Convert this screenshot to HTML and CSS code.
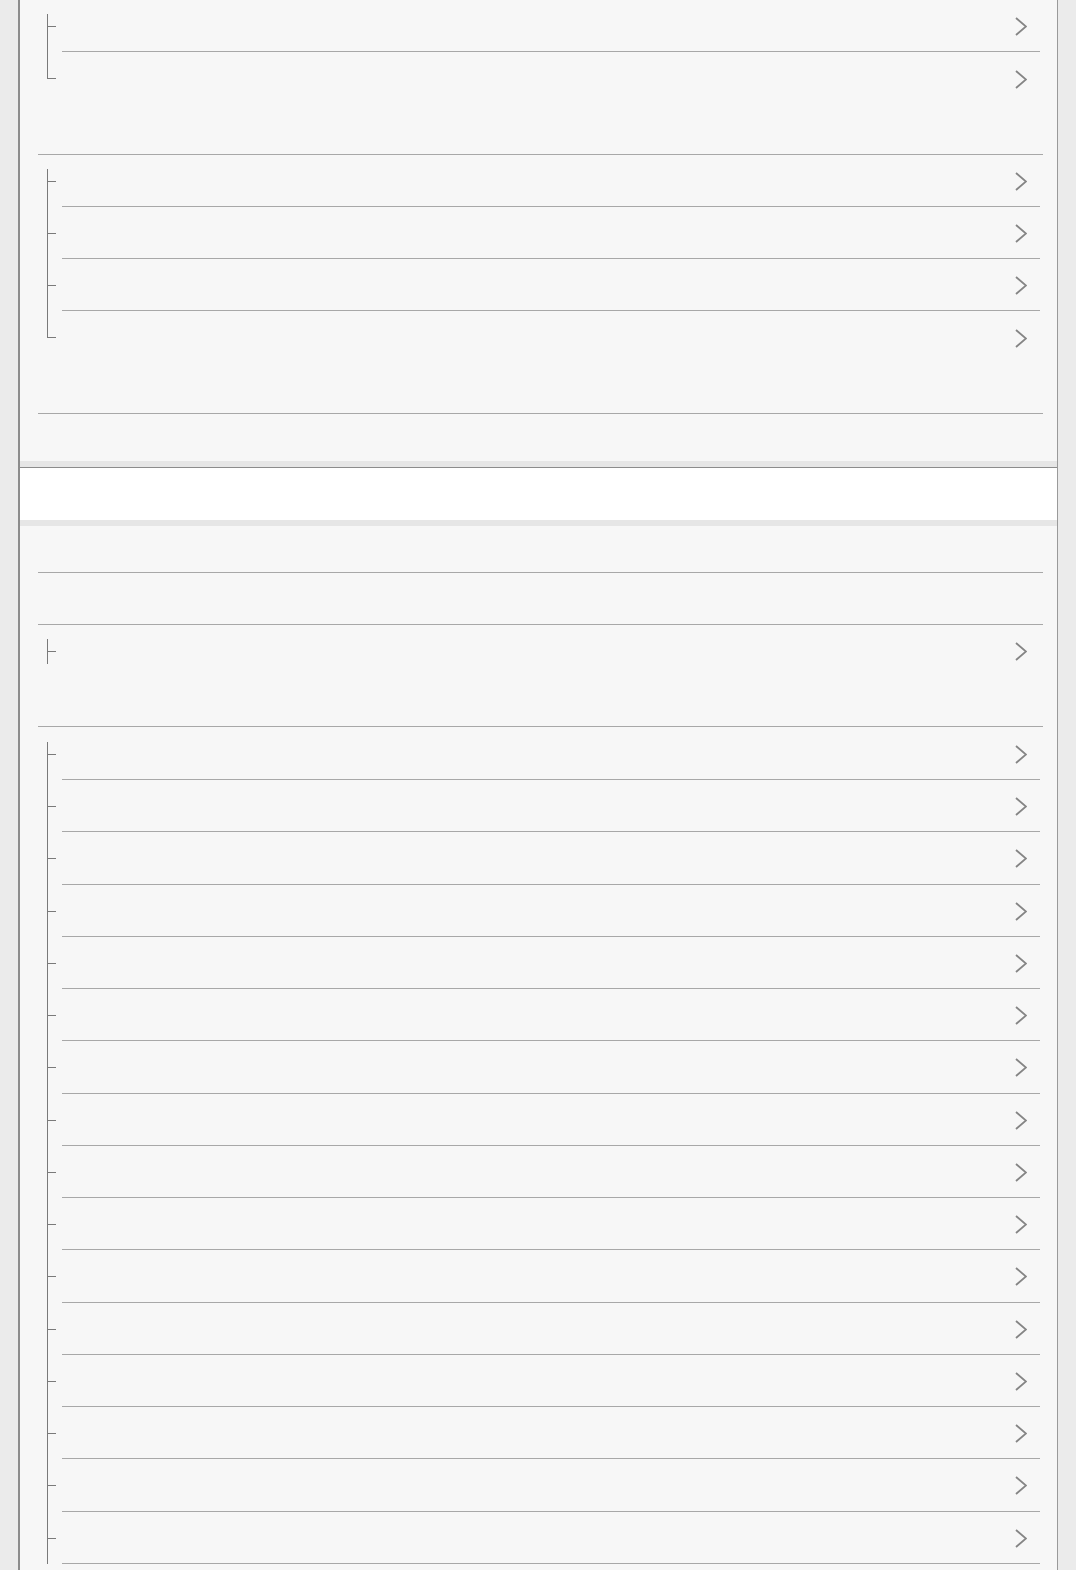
FILE: index.html
```html
<!DOCTYPE html>
<html lang="en">
<head>
<meta charset="utf-8">
<title>List</title>
<link rel="stylesheet" href="styles.css">
</head>
<body>
<div class="panel">
  <div class="group">
    <div class="row first"><div class="tree"><div class="up"></div><div class="down"></div></div><div class="main"><svg class="chev" viewBox="0 0 12 20"><polyline points="1,1 11,9.5 1,18"/></svg></div></div>
    <div class="row last"><div class="tree"><div class="up"></div><div class="down"></div></div><div class="main"><svg class="chev" viewBox="0 0 12 20"><polyline points="1,1 11,9.5 1,18"/></svg></div></div>
  </div>
  <div class="group">
    <div class="row first"><div class="tree"><div class="up"></div><div class="down"></div></div><div class="main"><svg class="chev" viewBox="0 0 12 20"><polyline points="1,1 11,9.5 1,18"/></svg></div></div>
    <div class="row"><div class="tree"><div class="up"></div><div class="down"></div></div><div class="main"><svg class="chev" viewBox="0 0 12 20"><polyline points="1,1 11,9.5 1,18"/></svg></div></div>
    <div class="row"><div class="tree"><div class="up"></div><div class="down"></div></div><div class="main"><svg class="chev" viewBox="0 0 12 20"><polyline points="1,1 11,9.5 1,18"/></svg></div></div>
    <div class="row last"><div class="tree"><div class="up"></div><div class="down"></div></div><div class="main"><svg class="chev" viewBox="0 0 12 20"><polyline points="1,1 11,9.5 1,18"/></svg></div></div>
  </div>
  <div class="bar"></div>
  <div class="blank-row tall"></div>
  <div class="blank-row"></div>
  <div class="group">
    <div class="row first single"><div class="tree"><div class="up"></div><div class="down"></div></div><div class="main"><svg class="chev" viewBox="0 0 12 20"><polyline points="1,1 11,9.5 1,18"/></svg></div></div>
  </div>
  <div class="group open">
    <div class="row first"><div class="tree"><div class="up"></div><div class="down"></div></div><div class="main"><svg class="chev" viewBox="0 0 12 20"><polyline points="1,1 11,9.5 1,18"/></svg></div></div>
    <div class="row"><div class="tree"><div class="up"></div><div class="down"></div></div><div class="main"><svg class="chev" viewBox="0 0 12 20"><polyline points="1,1 11,9.5 1,18"/></svg></div></div>
    <div class="row"><div class="tree"><div class="up"></div><div class="down"></div></div><div class="main"><svg class="chev" viewBox="0 0 12 20"><polyline points="1,1 11,9.5 1,18"/></svg></div></div>
    <div class="row"><div class="tree"><div class="up"></div><div class="down"></div></div><div class="main"><svg class="chev" viewBox="0 0 12 20"><polyline points="1,1 11,9.5 1,18"/></svg></div></div>
    <div class="row"><div class="tree"><div class="up"></div><div class="down"></div></div><div class="main"><svg class="chev" viewBox="0 0 12 20"><polyline points="1,1 11,9.5 1,18"/></svg></div></div>
    <div class="row"><div class="tree"><div class="up"></div><div class="down"></div></div><div class="main"><svg class="chev" viewBox="0 0 12 20"><polyline points="1,1 11,9.5 1,18"/></svg></div></div>
    <div class="row"><div class="tree"><div class="up"></div><div class="down"></div></div><div class="main"><svg class="chev" viewBox="0 0 12 20"><polyline points="1,1 11,9.5 1,18"/></svg></div></div>
    <div class="row"><div class="tree"><div class="up"></div><div class="down"></div></div><div class="main"><svg class="chev" viewBox="0 0 12 20"><polyline points="1,1 11,9.5 1,18"/></svg></div></div>
    <div class="row"><div class="tree"><div class="up"></div><div class="down"></div></div><div class="main"><svg class="chev" viewBox="0 0 12 20"><polyline points="1,1 11,9.5 1,18"/></svg></div></div>
    <div class="row"><div class="tree"><div class="up"></div><div class="down"></div></div><div class="main"><svg class="chev" viewBox="0 0 12 20"><polyline points="1,1 11,9.5 1,18"/></svg></div></div>
    <div class="row"><div class="tree"><div class="up"></div><div class="down"></div></div><div class="main"><svg class="chev" viewBox="0 0 12 20"><polyline points="1,1 11,9.5 1,18"/></svg></div></div>
    <div class="row"><div class="tree"><div class="up"></div><div class="down"></div></div><div class="main"><svg class="chev" viewBox="0 0 12 20"><polyline points="1,1 11,9.5 1,18"/></svg></div></div>
    <div class="row"><div class="tree"><div class="up"></div><div class="down"></div></div><div class="main"><svg class="chev" viewBox="0 0 12 20"><polyline points="1,1 11,9.5 1,18"/></svg></div></div>
    <div class="row"><div class="tree"><div class="up"></div><div class="down"></div></div><div class="main"><svg class="chev" viewBox="0 0 12 20"><polyline points="1,1 11,9.5 1,18"/></svg></div></div>
    <div class="row"><div class="tree"><div class="up"></div><div class="down"></div></div><div class="main"><svg class="chev" viewBox="0 0 12 20"><polyline points="1,1 11,9.5 1,18"/></svg></div></div>
    <div class="row"><div class="tree"><div class="up"></div><div class="down"></div></div><div class="main"><svg class="chev" viewBox="0 0 12 20"><polyline points="1,1 11,9.5 1,18"/></svg></div></div>
  </div>
</div>
</body>
</html>
```

FILE: styles.css
```css
html, body {
  margin: 0;
  padding: 0;
  height: 100%;
  overflow: hidden;
}
body {
  background: #ebebeb;
  font-family: "Liberation Sans", Arial, sans-serif;
}
.panel {
  margin-left: 18px;
  width: 1037px;
  min-height: 100%;
  background: #f7f7f7;
  border-left: 2px solid #8c8c8c;
  border-right: 1px solid #9a9a9a;
}
.group {
  margin: 0 14px 0 18px;
  padding-bottom: 49px;
  border-bottom: 1px solid #a8a8a8;
}
.group.open {
  padding-top: 1px;
  padding-bottom: 0;
  border-bottom: none;
}
.row {
  display: flex;
  height: 52.25px;
}
.tree {
  width: 24px;
  box-sizing: border-box;
  padding-left: 9px;
  display: flex;
  flex-direction: column;
}
.tree .up {
  width: 9px;
  height: 27px;
  box-sizing: border-box;
  border-left: 1px solid #7a7a7a;
  border-bottom: 1px solid #7a7a7a;
}
.tree .down {
  width: 9px;
  flex: 1;
  box-sizing: border-box;
  border-left: 1px solid #7a7a7a;
}
.row.first .up {
  margin-top: 14px;
  height: 13px;
}
.row.last .down {
  border-left: none;
}
.row.single .down {
  flex: none;
  height: 12px;
}
.main {
  flex: 1;
  margin-right: 3px;
  box-sizing: border-box;
  border-bottom: 1px solid #a8a8a8;
  display: flex;
  align-items: center;
  justify-content: flex-end;
  padding-top: 3px;
  padding-right: 13px;
}
.row.last .main,
.row.single .main {
  border-bottom: none;
}
.chev {
  width: 12px;
  height: 20px;
  fill: none;
  stroke: #858585;
  stroke-width: 1.8;
}
.bar {
  position: relative;
  margin-top: 53px;
  height: 52px;
  background: #ffffff;
  border-top: 1px solid #8c8c8c;
  box-shadow: 0 -6px 0 #e6e6e6, 0 6px 0 #e6e6e6;
}
.blank-row {
  margin: 0 14px 0 18px;
  height: 51px;
  border-bottom: 1px solid #a8a8a8;
}
.blank-row.tall {
  height: 52px;
}
```
